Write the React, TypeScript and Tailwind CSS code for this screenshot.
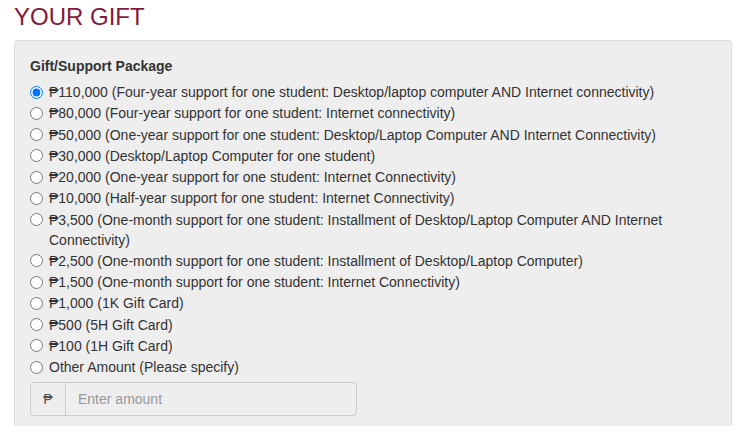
import { useState } from 'react'

const PACKAGES = [
  '₱110,000 (Four-year support for one student: Desktop/laptop computer AND Internet connectivity)',
  '₱80,000 (Four-year support for one student: Internet connectivity)',
  '₱50,000 (One-year support for one student: Desktop/Laptop Computer AND Internet Connectivity)',
  '₱30,000 (Desktop/Laptop Computer for one student)',
  '₱20,000 (One-year support for one student: Internet Connectivity)',
  '₱10,000 (Half-year support for one student: Internet Connectivity)',
  '₱3,500 (One-month support for one student: Installment of Desktop/Laptop Computer AND Internet Connectivity)',
  '₱2,500 (One-month support for one student: Installment of Desktop/Laptop Computer)',
  '₱1,500 (One-month support for one student: Internet Connectivity)',
  '₱1,000 (1K Gift Card)',
  '₱500 (5H Gift Card)',
  '₱100 (1H Gift Card)',
  'Other Amount (Please specify)',
]

export default function App() {
  const [selected, setSelected] = useState(0)

  return (
    <div
      className="min-h-screen bg-white px-[14px] pt-[4px] text-[14px] text-[#333333]"
      style={{ fontFamily: '"Liberation Sans", Arial, sans-serif' }}
    >
      <h1 className="text-[24px] leading-[26px] font-normal text-[#85193d]">YOUR GIFT</h1>

      <div className="mt-[10px] w-[718px] rounded-t-[4px] border border-b-0 border-[#dcdcdc] bg-[#eeeeee] px-[15px] pt-[15px] pb-[10px]">
        <div className="mb-[6px] font-bold leading-5">Gift/Support Package</div>

        <div className="flex flex-col gap-[1.25px]">
          {PACKAGES.map((label, i) => (
            <label key={label} className="flex items-start gap-[6px] leading-5">
              <input
                type="radio"
                name="package"
                checked={selected === i}
                onChange={() => setSelected(i)}
                className="m-0 mt-[3.5px] h-[13px] w-[13px] shrink-0"
              />
              <span className="pr-[50px]">{label}</span>
            </label>
          ))}
        </div>

        <div className="mt-[5px] flex h-[34px] w-[327px] rounded-[4px] border border-[#cccccc]">
          <span className="flex w-[35px] shrink-0 items-center justify-center border-r border-[#cccccc] text-[#555555]">
            ₱
          </span>
          <input
            type="text"
            placeholder="Enter amount"
            className="min-w-0 flex-1 bg-transparent px-[12px] text-[14px] text-[#555555] outline-none placeholder:text-[#999999]"
          />
        </div>
      </div>
    </div>
  )
}
